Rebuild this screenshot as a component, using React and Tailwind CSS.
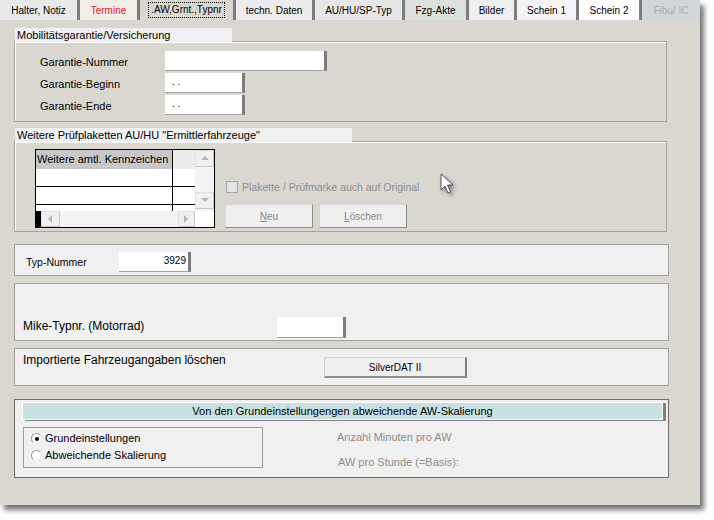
import React from "react";

const tabs = [
  { label: "Halter, Notiz", w: "w-[77px]", cls: "bg-[#e9e9e9] text-black" },
  { label: "Termine", w: "w-[60px]", cls: "bg-[#f1eee8] text-[#e02020]" },
  { label: ".AW,Grnt.,Typnr", w: "w-[96px]", cls: "bg-[#d9d7d0] text-black", active: true },
  { label: "techn. Daten", w: "w-[79px]", cls: "bg-[#ececec] text-black" },
  { label: "AU/HU/SP-Typ", w: "w-[90px]", cls: "bg-[#e7e7e7] text-black" },
  { label: "Fzg-Akte", w: "w-[64px]", cls: "bg-[#dde1de] text-black" },
  { label: "Bilder", w: "w-[48px]", cls: "bg-[#efefef] text-black" },
  { label: "Schein 1", w: "w-[62px]", cls: "bg-[#f4f4f4] text-black" },
  { label: "Schein 2", w: "w-[63px]", cls: "bg-white text-black" },
  { label: "Fibu/ IC", w: "w-[61px]", cls: "bg-[#d2d6d9] text-[#a9aeb3]" },
];

function Field({ w, h = "h-[20px]", children, right }) {
  return (
    <div
      className={`${w} ${h} bg-white border-r-[3px] border-r-[#7c7c7c] border-b border-b-[#a2a2a2] text-[10px] leading-[18px] ${
        right ? "text-right pr-[2px]" : "pl-[7px]"
      }`}
    >
      {children}
    </div>
  );
}

function Button({ w, h, children, disabled }) {
  return (
    <div
      className={`${w} ${h} flex items-center justify-center bg-[#efefef] border border-[#d4d4d4] border-r-[#8c8c8c] border-b-[#8c8c8c] text-[10px] ${
        disabled ? "text-[#8a8a8a]" : "text-black"
      }`}
    >
      {children}
    </div>
  );
}

function Arrow({ dir }) {
  const pts = {
    up: "1,6 5,2 9,6",
    down: "1,2 5,6 9,2",
    left: "6,1 2,5 6,9",
    right: "2,1 6,5 2,9",
  }[dir];
  return (
    <svg width="10" height="10" viewBox="0 0 10 10">
      <polygon points={pts} fill="#b5b5b5" />
    </svg>
  );
}

function Grid() {
  return (
    <div className="w-[180px] h-[79px] border border-black bg-white flex flex-col shrink-0 overflow-hidden">
      <div className="flex h-[61px]">
        <div className="w-[159px] flex flex-col">
          <div className="flex h-[19px] shrink-0">
            <div className="w-[137px] bg-[#c8c8c8] border-r border-black text-[11px] leading-[19px] pl-[1px] whitespace-nowrap overflow-hidden">
              Weitere amtl. Kennzeichen
            </div>
            <div className="flex-1 bg-[#ececec]" />
          </div>
          <div className="flex h-[18px] shrink-0 border-b border-black bg-white">
            <div className="w-[137px] border-r border-black" />
          </div>
          <div className="flex h-[18px] shrink-0 border-b border-black bg-white">
            <div className="w-[137px] border-r border-black" />
          </div>
          <div className="flex flex-1 bg-white">
            <div className="w-[137px] border-r border-black" />
          </div>
        </div>
        <div className="w-[19px] bg-[#f3f3f3] flex flex-col justify-between">
          <div className="h-[17px] bg-[#f0f0f0] border border-[#e0e0e0] border-r-[#c8c8c8] border-b-[#c8c8c8] flex items-center justify-center">
            <Arrow dir="up" />
          </div>
          <div className="h-[17px] mb-[2px] bg-[#f0f0f0] border border-[#e0e0e0] border-r-[#c8c8c8] border-b-[#c8c8c8] flex items-center justify-center">
            <Arrow dir="down" />
          </div>
        </div>
      </div>
      <div className="flex flex-1">
        <div className="w-[5px] bg-black" />
        <div className="w-[19px] bg-[#f0f0f0] border border-[#e0e0e0] border-r-[#c8c8c8] border-b-[#c8c8c8] flex items-center justify-center">
          <Arrow dir="left" />
        </div>
        <div className="flex-1 bg-[#f3f3f3]" />
        <div className="w-[17px] bg-[#f0f0f0] border border-[#e0e0e0] border-r-[#c8c8c8] border-b-[#c8c8c8] flex items-center justify-center">
          <Arrow dir="right" />
        </div>
        <div className="w-[19px] bg-white" />
      </div>
    </div>
  );
}

function Radio({ checked, label }) {
  return (
    <div className="flex items-center h-[17px] gap-[3px]">
      <div className="w-[11px] h-[11px] rounded-full border border-[#9a9a9a] border-r-[#e8e8e8] border-b-[#e8e8e8] bg-white flex items-center justify-center">
        {checked && <div className="w-[4px] h-[4px] rounded-full bg-black" />}
      </div>
      <span className="text-[11px] text-black">{label}</span>
    </div>
  );
}

export default function App() {
  return (
    <div
      className="min-h-screen bg-white"
      style={{ fontFamily: '"Liberation Sans", Arial, sans-serif' }}
    >
      <div className="relative w-[700px] h-[505px] bg-[#d9d7d0] shadow-[4px_5px_5px_rgba(0,0,0,0.55)] flex flex-col">
        {/* tabs */}
        <div className="flex h-[20px]">
          {tabs.map((t, i) => (
            <div
              key={t.label}
              className={`${t.w} ${t.cls} h-full flex items-center justify-center text-[10px] whitespace-nowrap ${
                i > 0 ? "border-l-[3px] border-l-[#7d7d7d]" : ""
              }`}
            >
              {t.active ? (
                <span className="border border-dotted border-black px-[2px] leading-[14px]">
                  {t.label}
                </span>
              ) : (
                t.label
              )}
            </div>
          ))}
        </div>

        <div className="pl-[14px] flex flex-col">
          {/* Mobilitätsgarantie */}
          <div className="mt-[8px] relative z-10 ml-px w-[217px] h-[14px] bg-[#f0f0f0] text-[11px] leading-[14px] pl-[2px]">
            Mobilitätsgarantie/Versicherung
          </div>
          <div className="-mt-px w-[653px] h-[81px] border border-[#a3a3a3] shadow-[inset_1px_1px_0_#fff] pt-[9px] pl-[25px] flex flex-col gap-[2px]">
            <div className="flex items-center">
              <span className="w-[125px] text-[11px] mt-[2px]">Garantie-Nummer</span>
              <Field w="w-[162px]" />
            </div>
            <div className="flex items-center">
              <span className="w-[125px] text-[11px] mt-[2px]">Garantie-Beginn</span>
              <Field w="w-[80px]">. .</Field>
            </div>
            <div className="flex items-center">
              <span className="w-[125px] text-[11px] mt-[2px]">Garantie-Ende</span>
              <Field w="w-[80px]">. .</Field>
            </div>
          </div>

          {/* Weitere Prüfplaketten */}
          <div className="mt-[6px] relative z-10 ml-px w-[337px] h-[14px] bg-[#f0f0f0] text-[11px] leading-[14px] pl-[2px] whitespace-nowrap">
            Weitere Prüfplaketten AU/HU "Ermittlerfahrzeuge"
          </div>
          <div className="-mt-px w-[653px] h-[91px] border border-[#a3a3a3] shadow-[inset_1px_1px_0_#fff] pt-[7px] pl-[20px] flex">
            <Grid />
            <div className="ml-[10px] flex flex-col justify-end pb-[3px]">
              <div className="flex items-center gap-[4px] mb-[8px] ml-px">
                <div className="w-[12px] h-[12px] border border-[#a8a8a8] bg-[#e4e4e4]" />
                <span className="text-[10.5px] text-[#8f8f8f] mt-[2px]">
                  Plakette / Prüfmarke auch auf Original
                </span>
              </div>
              <div className="flex gap-[6px]">
                <Button w="w-[88px]" h="h-[24px]" disabled>
                  <span>
                    <u>N</u>eu
                  </span>
                </Button>
                <Button w="w-[88px]" h="h-[24px]" disabled>
                  <span>
                    <u>L</u>öschen
                  </span>
                </Button>
              </div>
            </div>
          </div>

          {/* Typ-Nummer */}
          <div className="mt-[12px] w-[655px] h-[32px] bg-[#f0f0f0] border border-[#a3a3a3] pt-[7px] pl-[11px] flex items-start">
            <span className="w-[93px] text-[10.5px] mt-[3px]">Typ-Nummer</span>
            <Field w="w-[72px]" right>
              3929
            </Field>
          </div>

          {/* Mike-Typnr */}
          <div className="mt-[7px] w-[655px] h-[58px] bg-[#f0f0f0] border border-[#a3a3a3] pl-[8px] pb-[2px] flex items-end">
            <span className="w-[254px] text-[12px] mb-[3px]">Mike-Typnr. (Motorrad)</span>
            <Field w="w-[69px]" h="h-[21px]" />
          </div>

          {/* Importierte Fahrzeugangaben */}
          <div className="mt-[7px] w-[655px] h-[38px] bg-[#f0f0f0] border border-[#a3a3a3] pl-[8px] pt-[4px] flex items-start">
            <span className="w-[301px] text-[12px] leading-[14px]">
              Importierte Fahrzeugangaben löschen
            </span>
            <div className="mt-[4px] w-[143px] h-[21px] flex items-center justify-center bg-[#efefef] border border-[#d0d0d0] border-r-2 border-b-2 border-r-[#808080] border-b-[#909090] text-[10px]">
              SilverDAT II
            </div>
          </div>

          {/* AW-Skalierung */}
          <div className="mt-[13px] w-[655px] h-[79px] bg-[#f0f0f0] border border-[#6e6e6e] pl-[7px] pt-[2px] flex flex-col">
            <div className="w-[641px] h-[18px] bg-[#c9e0e2] border border-white shadow-[3px_1px_0_#7e7e7e] text-[11px] leading-[16px] text-center">
              Von den Grundeinstellungengen abweichende AW-Skalierung
            </div>
            <div className="flex mt-[7px]">
              <div className="ml-px w-[240px] h-[41px] border border-[#9a9a9a] pl-[7px] pt-[2px] flex flex-col">
                <Radio checked label="Grundeinstellungen" />
                <Radio label="Abweichende Skalierung" />
              </div>
              <div className="ml-[74px] flex flex-col text-[11px] text-[#8c8c8c] pt-[3px]">
                <span className="h-[14px] leading-[14px]">Anzahl Minuten pro AW</span>
                <span className="mt-[11px] ml-px h-[14px] leading-[14px]">AW pro Stunde (=Basis):</span>
              </div>
            </div>
          </div>
        </div>

        {/* mouse pointer */}
        <svg
          className="absolute left-[440px] top-[173px] drop-shadow-[2px_2px_2px_rgba(0,0,0,0.45)]"
          width="14"
          height="22"
          viewBox="0 0 14 22"
        >
          <path
            d="M1 1 L1 17 L5 13 L8 20 L10.5 19 L7.5 12 L13 12 Z"
            fill="#fff"
            stroke="#555"
            strokeWidth="1"
            strokeLinejoin="round"
          />
        </svg>
      </div>
    </div>
  );
}
